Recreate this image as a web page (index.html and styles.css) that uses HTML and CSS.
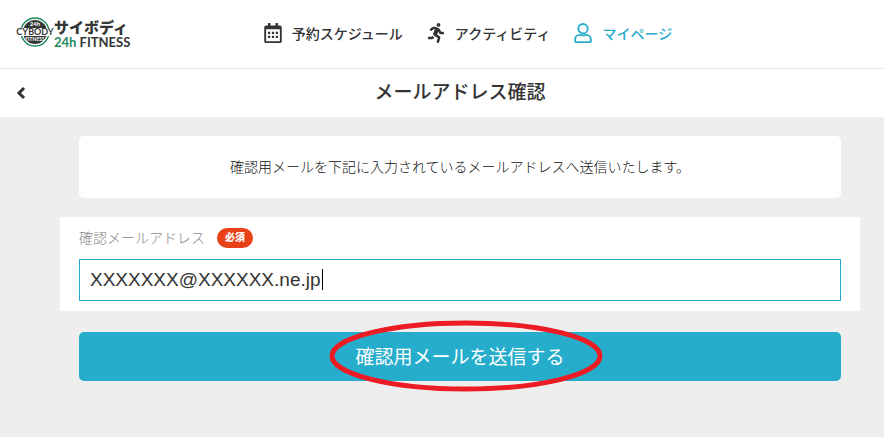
FILE: index.html
```html
<!DOCTYPE html>
<html lang="ja">
<head>
    <meta charset="UTF-8">
    <meta name="viewport" content="width=device-width, initial-scale=1.0">
    <title>メールアドレス確認</title>
    <link rel="stylesheet" href="styles.css">
</head>
<body>
    <!-- ヘッダー -->
    <header class="header">
        <a href="#" class="logo" aria-label="サイボディ 24h FITNESS">
            <svg class="logo-mark" viewBox="0 0 38 32" aria-hidden="true">
                <circle cx="19" cy="16" r="14" fill="#fff" stroke="#1f8a5f" stroke-width="1.4"/>
                <circle cx="19" cy="16" r="12" fill="#333836"/>
                <rect x="0" y="12" width="38" height="8" fill="#fff"/>
                <text x="19" y="10" class="mark-small">24h</text>
                <text x="19" y="19" class="mark-name">CYBODY</text>
                <text x="19" y="25" class="mark-tiny">FITNESS</text>
            </svg>
            <span class="logo-text">
                <span class="logo-name">サイボディ</span>
                <span class="logo-sub"><span class="green">24h</span> FITNESS</span>
            </span>
        </a>
        <nav class="nav">
            <a href="#" class="nav-link">
                <svg class="icon" viewBox="0 0 448 512" aria-hidden="true">
                    <path fill="currentColor" d="M400 64h-48V12c0-7-5-12-12-12h-40c-7 0-12 5-12 12v52H160V12c0-7-5-12-12-12h-40c-7 0-12 5-12 12v52H48C21 64 0 86 0 112v352c0 27 21 48 48 48h352c27 0 48-21 48-48V112c0-26-21-48-48-48zm-6 400H54c-3 0-6-3-6-6V160h352v298c0 3-3 6-6 6z"/>
                    <path fill="currentColor" d="M96 224h56v56H96zM196 224h56v56h-56zM296 224h56v56h-56zM96 328h56v56H96zM196 328h56v56h-56zM296 328h56v56h-56z"/>
                </svg>
                予約スケジュール
            </a>
            <a href="#" class="nav-link">
                <svg class="icon" viewBox="0 0 416 512" aria-hidden="true">
                    <path fill="currentColor" d="M272 96c26.500 0 48-21.500 48-48S298.500 0 272 0s-48 21.500-48 48 21.500 48 48 48zM113.700 317.500l-14.800 34.500H32c-17.700 0-32 14.300-32 32s14.300 32 32 32h77.500c19.200 0 36.500-11.400 44.100-29.100l8.800-20.500-10.700-6.300c-17.400-10.300-30-25.300-38-42.600zM384 224h-44l-26.100-53.300c-12.500-25.500-35.400-44.200-61.800-50.900l-71.100-21.200c-28.600-6.900-58.100-.4-81 17.100L60.300 146.200c-14 10.800-16.700 30.900-5.900 44.900s30.800 16.700 44.900 5.900l39.700-30.400c7.700-5.900 17.400-8.100 25.300-6.200l14.700 4.400-37.500 87.400c-12.600 29.500-1.300 64 26.500 80.400l85 50.200-27.500 87.800c-5.300 16.900 4.100 34.900 21 40.100 3.200 1 6.400 1.500 9.600 1.500 13.600 0 26.200-8.800 30.500-22.400l31.700-101.200c5.900-20.500-2.900-42.800-21.600-54l-61.200-36.100 31.300-78.200 20.300 41.400c8 16.400 25 27 43.200 27H384c17.700 0 32-14.300 32-32s-14.300-32.800-32-32.800z"/>
                </svg>
                アクティビティ
            </a>
            <a href="#" class="nav-link active">
                <svg class="icon" viewBox="0 0 448 512" aria-hidden="true">
                    <path fill="none" stroke="currentColor" stroke-width="48" stroke-linejoin="round" d="M224 24a120 120 0 1 1 0 240a120 120 0 1 1 0-240zM136 304c30 0 45 14 88 14s58-14 88-14c62 0 112 50 112 112v48c0 14-10 24-24 24H48c-14 0-24-10-24-24v-48c0-62 50-112 112-112z"/>
                </svg>
                マイページ
            </a>
        </nav>
    </header>

    <!-- ページタイトル -->
    <div class="title-bar">
        <a href="#" class="back" aria-label="戻る">
            <svg viewBox="0 0 10 14" aria-hidden="true">
                <path d="M8 2L3 7L8 12" fill="none" stroke="currentColor" stroke-width="3"/>
            </svg>
        </a>
        <h1>メールアドレス確認</h1>
    </div>

    <main class="main">
        <p class="message">確認用メールを下記に入力されているメールアドレスへ送信いたします。</p>

        <form class="form">
            <div class="field">
                <div class="field-head">
                    <label for="email">確認メールアドレス</label>
                    <span class="required">必須</span>
                </div>
                <div class="input-wrap">
                    <input type="text" id="email" name="email" value="XXXXXXX@XXXXXX.ne.jp">
                    <span class="caret"></span>
                </div>
            </div>

            <div class="submit">
                <button type="button">確認用メールを送信する</button>
                <!-- ボタンを囲む赤い丸 -->
                <svg class="mark" viewBox="0 0 274 72" aria-hidden="true">
                    <ellipse cx="137" cy="36" rx="134" ry="33" fill="none" stroke="#ed1c24" stroke-width="5"/>
                </svg>
            </div>
        </form>
    </main>
</body>
</html>
```

FILE: styles.css
```css
* {
    box-sizing: border-box;
}

body {
    margin: 0;
    min-height: 100vh;
    font-family: "Liberation Sans", "Noto Sans CJK JP", sans-serif;
    font-size: 14px;
    color: #333;
    background-color: #eee;
}

a {
    color: inherit;
    text-decoration: none;
}

/* ヘッダー */
.header {
    display: grid;
    grid-template-columns: 1fr auto 1fr;
    align-items: center;
    height: 69px;
    padding: 0 16px;
    background-color: #fff;
    border-bottom: 1px solid #e8e8e8;
}

.logo {
    display: flex;
    align-items: center;
    width: max-content;
    margin-bottom: 4px;
}

.logo-mark {
    width: 38px;
    height: 32px;
}

.logo-mark text {
    font-family: Lato, sans-serif;
    font-weight: bold;
    text-anchor: middle;
}

.mark-small {
    font-size: 6px;
    fill: #fff;
}

.logo-mark .mark-name {
    font-size: 9px;
    fill: #333836;
}

.mark-tiny {
    font-size: 5px;
    fill: #fff;
}

.logo-text {
    display: flex;
    flex-direction: column;
    padding-top: 2px;
    color: #333836;
}

.logo-name {
    font-family: "Noto Sans CJK JP", sans-serif;
    font-size: 15px;
    font-weight: 900;
    line-height: 18px;
}

.logo-sub {
    font-family: Lato, sans-serif;
    font-size: 13px;
    font-weight: bold;
    line-height: 13px;
}

.green {
    color: #1f8a5f;
}

.nav {
    display: flex;
    gap: 24px;
    padding-left: 52px;
}

.nav-link {
    display: flex;
    align-items: center;
    gap: 10px;
    font-weight: 500;
    line-height: 20px;
}

.nav-link.active {
    color: #27adcc;
}

.icon {
    width: 18px;
    height: 20px;
    margin-bottom: 3px;
}

/* ページタイトル */
.title-bar {
    display: grid;
    grid-template-columns: 1fr auto 1fr;
    align-items: center;
    height: 48px;
    padding: 0 16px;
    background-color: #fff;
}

.title-bar h1 {
    margin: 0;
    padding-left: 36px;
    font-size: 19px;
    font-weight: 500;
    line-height: 28px;
}

.back {
    width: 10px;
    height: 14px;
}

.back svg {
    display: block;
}

/* 本文 */
.main {
    padding: 19px 24px 19px 60px;
}

.message {
    margin: 0 19px 19px;
    padding: 20px;
    font-weight: 300;
    line-height: 22px;
    text-align: center;
    color: #111;
    background-color: #fff;
    border-radius: 5px;
}

.field {
    padding: 10px 19px;
    background-color: #fff;
}

.field-head {
    display: flex;
    align-items: center;
    gap: 12px;
    margin-bottom: 10px;
    font-weight: 300;
    line-height: 22px;
    color: #888;
}

.required {
    padding: 0 8px;
    font-size: 10px;
    font-weight: 900;
    line-height: 20px;
    color: #fff;
    background-color: #e84118;
    border-radius: 10px;
}

.input-wrap {
    position: relative;
}

.input-wrap input {
    display: block;
    width: 100%;
    height: 42px;
    padding: 0 10px;
    font-family: inherit;
    font-size: 19px;
    color: #333;
    caret-color: transparent;
    background-color: #fff;
    border: 1px solid #27adcc;
    border-radius: 0;
    outline: none;
}

/* 入力カーソル */
.caret {
    position: absolute;
    top: 10px;
    left: 243px;
    width: 1px;
    height: 21px;
    background-color: #000;
}

.submit {
    position: relative;
    margin: 21px 19px 0;
}

.submit button {
    display: block;
    width: 100%;
    height: 49px;
    padding: 0 0 2px;
    font-family: inherit;
    font-size: 19px;
    font-weight: 400;
    color: #fff;
    background-color: #27adcc;
    border: none;
    border-radius: 5px;
    cursor: pointer;
}

.mark {
    position: absolute;
    top: -12px;
    left: calc(50% - 131px);
    width: 274px;
    height: 72px;
    pointer-events: none;
}
```
